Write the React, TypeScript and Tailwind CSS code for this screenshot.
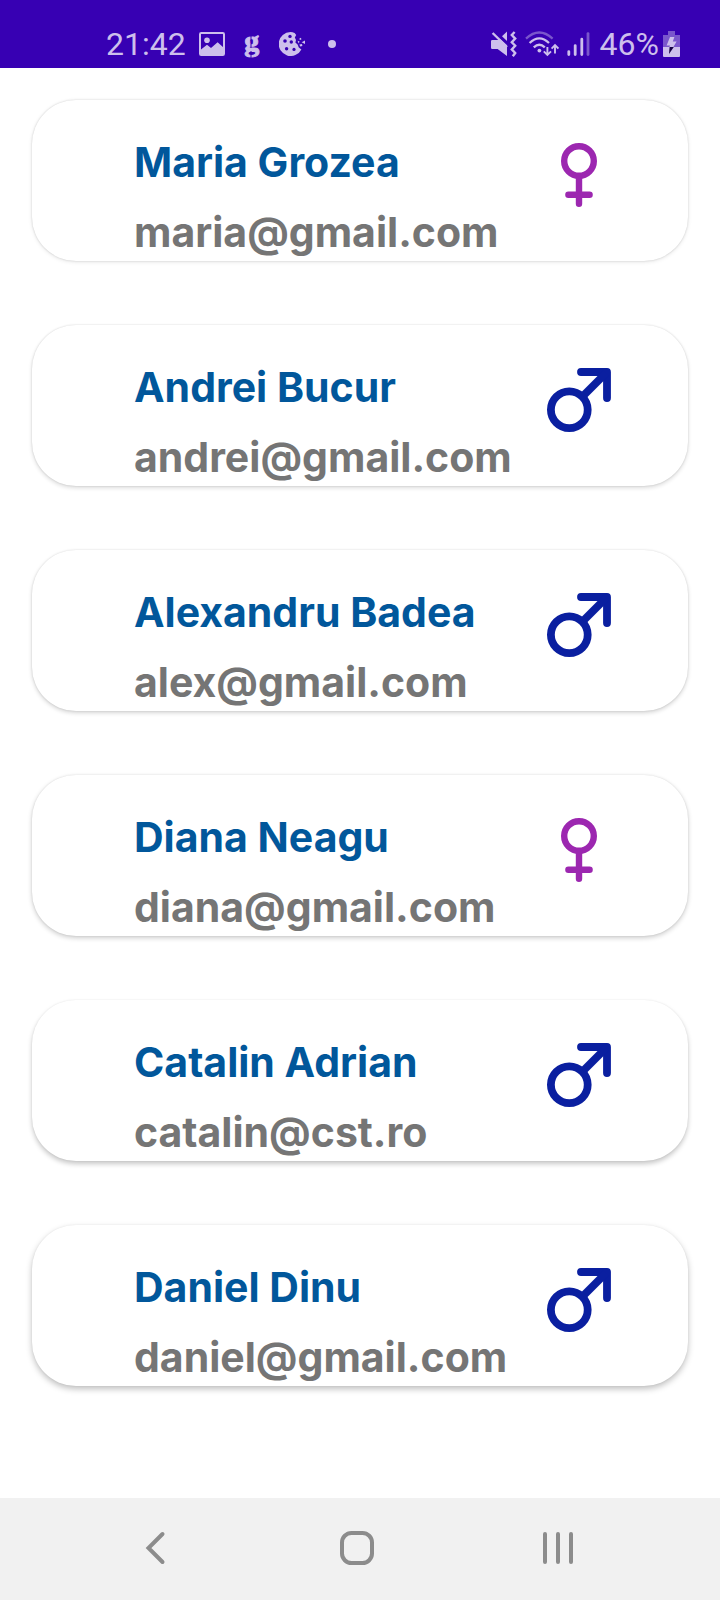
type Gender = 'female' | 'male';

interface Contact {
  name: string;
  email: string;
  gender: Gender;
  shadow: string;
}

const contacts: Contact[] = [
  { name: 'Maria Grozea', email: 'maria@gmail.com', gender: 'female', shadow: 'shadow-[0_0_2px_rgba(0,0,0,0.16),0_1px_4px_rgba(0,0,0,0.10)]' },
  { name: 'Andrei Bucur', email: 'andrei@gmail.com', gender: 'male', shadow: 'shadow-[0_0_2px_rgba(0,0,0,0.14),0_2px_4px_rgba(0,0,0,0.14)]' },
  { name: 'Alexandru Badea', email: 'alex@gmail.com', gender: 'male', shadow: 'shadow-[0_0_2px_rgba(0,0,0,0.12),0_2px_4px_rgba(0,0,0,0.17)]' },
  { name: 'Diana Neagu', email: 'diana@gmail.com', gender: 'female', shadow: 'shadow-[0_0_2px_rgba(0,0,0,0.10),0_2px_5px_rgba(0,0,0,0.20)]' },
  { name: 'Catalin Adrian', email: 'catalin@cst.ro', gender: 'male', shadow: 'shadow-[0_0_2px_rgba(0,0,0,0.07),0_3px_5px_rgba(0,0,0,0.22)]' },
  { name: 'Daniel Dinu', email: 'daniel@gmail.com', gender: 'male', shadow: 'shadow-[0_0_2px_rgba(0,0,0,0.06),0_3px_6px_rgba(0,0,0,0.25)]' },
];

function FemaleIcon() {
  return (
    <svg role="img" aria-label="Female" viewBox="0 0 64 64" className="size-16 shrink-0 text-[#9c27b0]" fill="none" stroke="currentColor" strokeWidth="6.4" strokeLinecap="round">
      <circle cx="32" cy="18" r="14.8" />
      <path d="M32 34V60.8M21.4 51.7H42.6" />
    </svg>
  );
}

function MaleIcon() {
  return (
    <svg role="img" aria-label="Male" viewBox="0 0 64 64" className="size-16 shrink-0 text-[#0a1fa0]" fill="none" stroke="currentColor" strokeWidth="7.8" strokeLinecap="round" strokeLinejoin="round">
      <circle cx="22.3" cy="41.7" r="18.4" />
      <path d="M34 4H60V30" />
      <path d="M36 28L59 5" strokeLinecap="butt" strokeWidth="7.8" />
    </svg>
  );
}

function PictureIcon() {
  return (
    <svg aria-hidden="true" viewBox="0 0 26 24" className="h-6 w-[26px]">
      <rect x="1" y="1" width="24" height="22" rx="1.2" fill="none" stroke="currentColor" strokeWidth="2" />
      <circle cx="8" cy="8.3" r="2.8" fill="currentColor" />
      <path d="M2 23V17.5L8 12.8L12 16L18.6 10.2L24.5 15.5V23Z" fill="currentColor" />
    </svg>
  );
}

function CookieIcon() {
  return (
    <svg aria-hidden="true" viewBox="0 0 26 24" className="h-6 w-[26px]">
      <path d="M11.5 0A12 12 0 1 0 22.4 17.4L19.8 15.4L18.6 12.6L16.4 10.6L17 8L15.8 5.4L17.2 3L15.6 0.9A12 12 0 0 0 11.5 0Z" fill="currentColor" />
      <g className="fill-[#3700b3]">
        <circle cx="11" cy="4.4" r="1.7" />
        <circle cx="6" cy="9" r="1.8" />
        <circle cx="12.3" cy="10" r="1.7" />
        <circle cx="7.6" cy="16.8" r="1.7" />
        <circle cx="15" cy="17.4" r="1.6" />
      </g>
      <path d="M20.4 6.4L22 5.8L22.4 7.4L20.8 8ZM18.6 8.8L20.6 9.4L19.6 11.4ZM26 8.4V12L22.6 10.2ZM20.4 12.4L23 12L23.4 14L21.2 14.6Z" fill="currentColor" />
    </svg>
  );
}

function GBadge() {
  return (
    <span className="relative w-[18px] pb-[6px] text-center font-['Liberation_Serif',serif] text-[30px] leading-9 font-bold [-webkit-text-stroke:1px_#cdbfec]">
      g
      <svg aria-hidden="true" viewBox="0 0 18 48" className="absolute inset-0 h-12 w-[18px]">
        <path d="M8 13V18M8 21V25M8 28V36" className="stroke-[#3700b3]" strokeWidth="1" />
      </svg>
    </span>
  );
}

function MuteIcon() {
  return (
    <svg aria-hidden="true" viewBox="0 0 26 26" className="size-[26px]">
      <path d="M0 10.2Q0 9 1.2 9H7L9.4 8.2L16 14.2V25L6.6 18H1.2Q0 18 0 16.8Z" fill="currentColor" />
      <path d="M11 5.2L16 0.6V10Z" fill="currentColor" />
      <path d="M1.6 2L16 16" stroke="currentColor" strokeWidth="2.4" />
      <path d="M23.6 1L20.8 4L24.2 7.6L20.8 11.2L24.2 14.8L20.8 18.4L24.2 22L21.8 25.2" fill="none" stroke="currentColor" strokeWidth="2.4" />
    </svg>
  );
}

function WifiIcon() {
  return (
    <svg aria-hidden="true" viewBox="0 0 34 26" className="h-[26px] w-[34px]" fill="none" stroke="currentColor" strokeWidth="2.3">
      <path d="M1 7.6Q14.3 -4.6 27.6 7.6" opacity="0.45" />
      <path d="M4.6 12Q14.3 2.8 24 12" />
      <path d="M8.8 16.4Q14.3 11 19.8 16.4" />
      <circle cx="14.4" cy="19.6" r="1.9" fill="currentColor" stroke="none" />
      <path d="M22.4 16V24M18.8 20.4L22.4 24L26 20.4M30 22.4V14M26.6 17.6L30 14.2L33.4 17.6" strokeWidth="1.9" />
    </svg>
  );
}

function SignalIcon() {
  return (
    <svg aria-hidden="true" viewBox="0 0 23 26" className="h-[26px] w-[23px]" stroke="currentColor" strokeWidth="2.8" strokeLinecap="round">
      <path d="M1.8 20.6V23.6M8.2 14.6V23.6M14.8 8.2V23.6" />
      <path d="M21 2.6V23.6" opacity="0.45" />
    </svg>
  );
}

function BatteryIcon() {
  return (
    <svg aria-hidden="true" viewBox="0 0 17 26" className="h-[26px] w-[17px]">
      <path d="M5 0H12V4H17V16H0V4H5Z" fill="currentColor" opacity="0.45" />
      <path d="M0 16H17V25Q17 26 16 26H1Q0 26 0 25Z" fill="currentColor" />
      <path d="M7 6H11.4L9.8 10.6H13.6L10.4 16H6.4L7 14.4H3.6Z" fill="currentColor" />
      <path d="M6.6 16H10.8L6 23Z" fill="#160044" />
    </svg>
  );
}

function StatusBar() {
  return (
    <header className="flex h-[68px] items-center justify-between bg-[#3700b3] pt-5 pr-10 pl-[106px] font-['Roboto',sans-serif] text-[32px] leading-8 text-[#cdbfec]">
      <div className="flex items-center">
        <time className="pr-[13px]">21:42</time>
        <PictureIcon />
        <div className="flex items-center gap-[18px] pl-[18px]">
          <GBadge />
          <CookieIcon />
        </div>
        <span className="ml-[23px] size-2 rounded-full bg-[#cdbfec]" />
      </div>
      <div className="flex items-center">
        <div className="flex items-center gap-2 pr-[10px]">
          <MuteIcon />
          <WifiIcon />
          <SignalIcon />
        </div>
        <span className="pr-1">46%</span>
        <BatteryIcon />
      </div>
    </header>
  );
}

function ContactCard({ name, email, gender, shadow }: Contact) {
  return (
    <li className={`flex items-start justify-between rounded-[44px] bg-white pr-[77px] pl-[102px] ${shadow}`}>
      <div className="min-w-0 pt-[37px] pb-1 font-['Inter',sans-serif] text-[41px] leading-[50px] font-bold whitespace-nowrap">
        <h2 className="pb-5 text-[#01579b]">{name}</h2>
        <p className="text-[#757575]">{email}</p>
      </div>
      <div className="pt-[43px]">{gender === 'female' ? <FemaleIcon /> : <MaleIcon />}</div>
    </li>
  );
}

function NavigationBar() {
  const icon = 'size-[34px]';
  return (
    <nav className="flex h-[102px] items-center justify-between bg-[#f1f1f1] pr-[145px] pb-[2px] pl-[138px] text-[#8c8c8c]">
      <button type="button" aria-label="Back">
        <svg viewBox="0 0 34 34" className={icon} fill="none" stroke="currentColor" strokeWidth="4" strokeLinecap="round">
          <path d="M24.5 3L10.5 17L24.5 31" />
        </svg>
      </button>
      <button type="button" aria-label="Home">
        <svg viewBox="0 0 34 34" className={icon} fill="none" stroke="currentColor" strokeWidth="4">
          <rect x="2" y="2" width="30" height="30" rx="9.5" />
        </svg>
      </button>
      <button type="button" aria-label="Recent apps">
        <svg viewBox="0 0 34 34" className={icon} fill="none" stroke="currentColor" strokeWidth="4" strokeLinecap="round">
          <path d="M4 3V31M17 3V31M30 3V31" />
        </svg>
      </button>
    </nav>
  );
}

export default function App() {
  return (
    <div className="flex min-h-screen flex-col bg-white">
      <StatusBar />
      <main className="grow">
        <ul className="flex flex-col gap-16 p-8">
          {contacts.map((contact) => (
            <ContactCard key={contact.email} {...contact} />
          ))}
        </ul>
      </main>
      <NavigationBar />
    </div>
  );
}
